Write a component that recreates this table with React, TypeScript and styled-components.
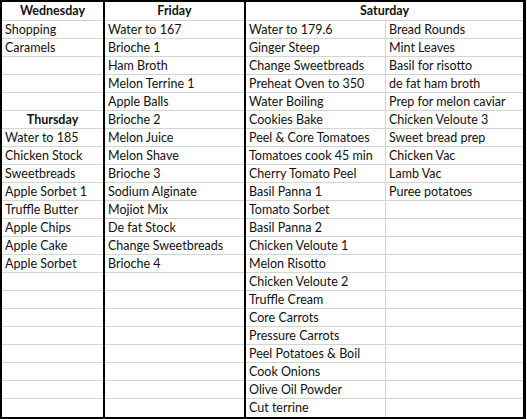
import React from "react";
import styled, { createGlobalStyle } from "styled-components";

const Global = createGlobalStyle`
  html, body { margin: 0; padding: 0; background: #ffffff; }
  body { font-family: "Lato", "Liberation Sans", Arial, sans-serif; }
`;

const GRID = "#d4d4d4";
const ROWS = 22;

const Sheet = styled.div`
  display: flex;
  width: 521px;
  border-top: 2px solid #000;
  border-left: 2px solid #000;
  border-right: 3px solid #000;
  border-bottom: 3px solid #000;
  background: #fff;
  color: #111;
  font-size: 12.5px;
`;

const Column = styled.div<{ $w: number; $divider?: boolean }>`
  display: flex;
  flex-direction: column;
  width: ${(p) => p.$w}px;
  flex: none;
  border-left: ${(p) => (p.$divider ? "2px solid #000" : "none")};
`;

const Cell = styled.div<{ $bold?: boolean; $center?: boolean; $head?: boolean }>`
  box-sizing: border-box;
  height: ${(p) => (p.$head ? 19 : 18)}px;
  border-bottom: 1px solid ${GRID};
  padding: 0 3px;
  line-height: ${(p) => (p.$head ? 18 : 17)}px;
  white-space: nowrap;
  overflow: hidden;
  font-weight: ${(p) => (p.$bold ? 700 : 400)};
  text-align: ${(p) => (p.$center ? "center" : "left")};
  &:last-child { border-bottom: none; }
`;

const SubGrid = styled.div`
  display: flex;
`;

const SubColumn = styled.div<{ $w: number; $line?: boolean }>`
  display: flex;
  flex-direction: column;
  width: ${(p) => p.$w}px;
  flex: none;
  border-right: ${(p) => (p.$line ? `1px solid ${GRID}` : "none")};
`;

type Item = string | { head: string };

const pad = (items: Item[]): Item[] => {
  const out = [...items];
  while (out.length < ROWS) out.push("");
  return out;
};

const wednesday: Item[] = pad([
  "Shopping",
  "Caramels",
  "",
  "",
  "",
  { head: "Thursday" },
  "Water to 185",
  "Chicken Stock",
  "Sweetbreads",
  "Apple Sorbet 1",
  "Truffle Butter",
  "Apple Chips",
  "Apple Cake",
  "Apple Sorbet",
]);

const friday: Item[] = pad([
  "Water to 167",
  "Brioche 1",
  "Ham Broth",
  "Melon Terrine 1",
  "Apple Balls",
  "Brioche 2",
  "Melon Juice",
  "Melon Shave",
  "Brioche 3",
  "Sodium Alginate",
  "Mojiot Mix",
  "De fat Stock",
  "Change Sweetbreads",
  "Brioche 4",
]);

const saturdayA: Item[] = pad([
  "Water to 179.6",
  "Ginger Steep",
  "Change Sweetbreads",
  "Preheat Oven to 350",
  "Water Boiling",
  "Cookies Bake",
  "Peel & Core Tomatoes",
  "Tomatoes cook 45 min",
  "Cherry Tomato Peel",
  "Basil Panna 1",
  "Tomato Sorbet",
  "Basil Panna 2",
  "Chicken Veloute 1",
  "Melon Risotto",
  "Chicken Veloute 2",
  "Truffle Cream",
  "Core Carrots",
  "Pressure Carrots",
  "Peel Potatoes & Boil",
  "Cook Onions",
  "Olive Oil Powder",
  "Cut terrine",
]);

const saturdayB: Item[] = pad([
  "Bread Rounds",
  "Mint Leaves",
  "Basil for risotto",
  "de fat ham broth",
  "Prep for melon caviar",
  "Chicken Veloute 3",
  "Sweet bread prep",
  "Chicken Vac",
  "Lamb Vac",
  "Puree potatoes",
]);

const Cells = ({ items }: { items: Item[] }) => (
  <>
    {items.map((it, i) =>
      typeof it === "string" ? (
        <Cell key={i}>{it}</Cell>
      ) : (
        <Cell key={i} $bold $center>
          {it.head}
        </Cell>
      )
    )}
  </>
);

export default function App() {
  return (
    <>
      <Global />
      <Sheet>
        <Column $w={101}>
          <Cell $head $bold $center>
            Wednesday
          </Cell>
          <Cells items={wednesday} />
        </Column>
        <Column $w={139} $divider>
          <Cell $head $bold $center>
            Friday
          </Cell>
          <Cells items={friday} />
        </Column>
        <Column $w={277} $divider>
          <Cell $head $bold $center>
            Saturday
          </Cell>
          <SubGrid>
            <SubColumn $w={139} $line>
              <Cells items={saturdayA} />
            </SubColumn>
            <SubColumn $w={137}>
              <Cells items={saturdayB} />
            </SubColumn>
          </SubGrid>
        </Column>
      </Sheet>
    </>
  );
}
